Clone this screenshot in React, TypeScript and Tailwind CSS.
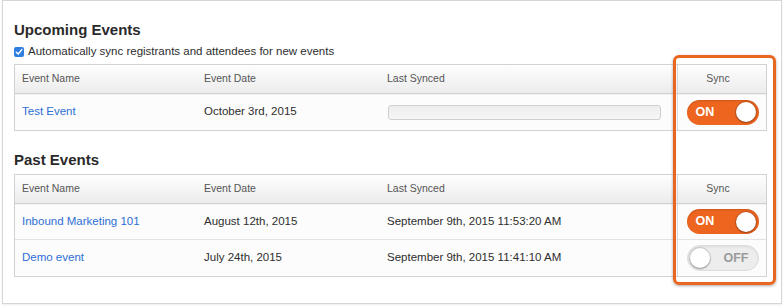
import React from "react";

const font = { fontFamily: '"Liberation Sans", Arial, sans-serif' };

function Toggle({ on }: { on: boolean }) {
  if (on) {
    return (
      <div className="relative w-[72px] h-[25px] rounded-full bg-[#ee6520] shadow-[inset_0_1px_2px_rgba(0,0,0,0.15)] flex items-center">
        <span className="ml-[9px] text-white font-bold text-[12.5px] leading-none">ON</span>
        <span className="absolute right-[3px] top-[2.5px] w-[20px] h-[20px] rounded-full bg-white shadow-[0_0_0_1px_rgba(0,0,0,0.12),0_1px_2px_rgba(0,0,0,0.3)]" />
      </div>
    );
  }
  return (
    <div className="relative w-[72px] h-[26px] rounded-full bg-[#ededed] border border-[#dcdcdc] shadow-[inset_0_1px_2px_rgba(0,0,0,0.08)] flex items-center justify-end">
      <span className="mr-[9px] text-[#9a9a9a] font-bold text-[12.5px] leading-none">OFF</span>
      <span className="absolute left-[2px] top-[2px] w-[20px] h-[20px] rounded-full bg-white shadow-[0_0_0_1px_rgba(0,0,0,0.12),0_1px_2px_rgba(0,0,0,0.3)]" />
    </div>
  );
}

type Row = { name: string; date: string; synced: string | null; on: boolean };

function EventTable({ rows }: { rows: Row[] }) {
  return (
    <div className="w-[753px] border border-[#d2d2d2] bg-[#fcfcfc]">
      <div className="flex h-[29px] border-b border-[#d0d0d0] bg-linear-to-b from-[#fefefe] to-[#ececec] text-[10.5px] text-[#555] shadow-[0_1px_1px_rgba(0,0,0,0.04)]">
        <div className="w-[181px] pl-[7px] flex items-center">Event Name</div>
        <div className="w-[184px] pl-[8px] flex items-center">Event Date</div>
        <div className="w-[297px] pl-[7px] flex items-center">Last Synced</div>
        <div className="flex-1 border-l border-[#d8d8d8] flex items-center justify-center pr-[8px]">Sync</div>
      </div>
      {rows.map((r, i) => (
        <div
          key={i}
          className={`flex h-[36px] text-[11.5px] text-[#2e2e2e] ${i < rows.length - 1 ? "border-b border-[#e2e2e2]" : ""}`}
        >
          <div className="w-[181px] pl-[7px] flex items-center text-[#2d6fd6]">{r.name}</div>
          <div className="w-[184px] pl-[8px] flex items-center">{r.date}</div>
          <div className="w-[297px] pl-[7px] flex items-center">
            {r.synced === null ? (
              <div className="ml-[1px] w-[273px] h-[15px] rounded-[3px] border border-[#cfcfcf] bg-linear-to-b from-[#ededed] to-[#f6f6f6]" />
            ) : (
              r.synced
            )}
          </div>
          <div className="flex-1 border-l border-[#d8d8d8] flex items-center justify-center pl-[1px]">
            <Toggle on={r.on} />
          </div>
        </div>
      ))}
    </div>
  );
}

export default function App() {
  return (
    <div className="relative w-[784px] h-[307px] bg-white overflow-hidden" style={font}>
      <div className="ml-[2px] w-[780px] h-[304px] border border-[#d6d6d6] bg-white shadow-[0_1px_2px_rgba(0,0,0,0.08)] pl-[11px]">
        <div className="pt-[19px] h-[39px] text-[15px] leading-[20px] font-bold text-[#2a2a2a]">
          Upcoming Events
        </div>
        <div className="mt-[5px] h-[14px] flex items-center text-[11.5px] text-[#2e2e2e]">
          <span className="w-[10px] h-[10px] rounded-[2px] bg-[#2f7de1] flex items-center justify-center mr-[4px]">
            <svg width="8" height="8" viewBox="0 0 8 8">
              <path d="M1.3 4.2 L3.2 6 L6.8 1.6" stroke="white" strokeWidth="1.5" fill="none" strokeLinecap="round" strokeLinejoin="round" />
            </svg>
          </span>
          Automatically sync registrants and attendees for new events
        </div>
        <div className="mt-[5px]">
          <EventTable rows={[{ name: "Test Event", date: "October 3rd, 2015", synced: null, on: true }]} />
        </div>
        <div className="mt-[19px] h-[20px] text-[15px] leading-[20px] font-bold text-[#2a2a2a]">Past Events</div>
        <div className="mt-[4px]">
          <EventTable
            rows={[
              { name: "Inbound Marketing 101", date: "August 12th, 2015", synced: "September 9th, 2015 11:53:20 AM", on: true },
              { name: "Demo event", date: "July 24th, 2015", synced: "September 9th, 2015 11:41:10 AM", on: false },
            ]}
          />
        </div>
      </div>
      <div className="absolute left-[673px] top-[55px] w-[103px] h-[230px] rounded-[6px] border-[3px] border-[#e9661f] shadow-[0_1px_3px_rgba(0,0,0,0.35)]" />
    </div>
  );
}
